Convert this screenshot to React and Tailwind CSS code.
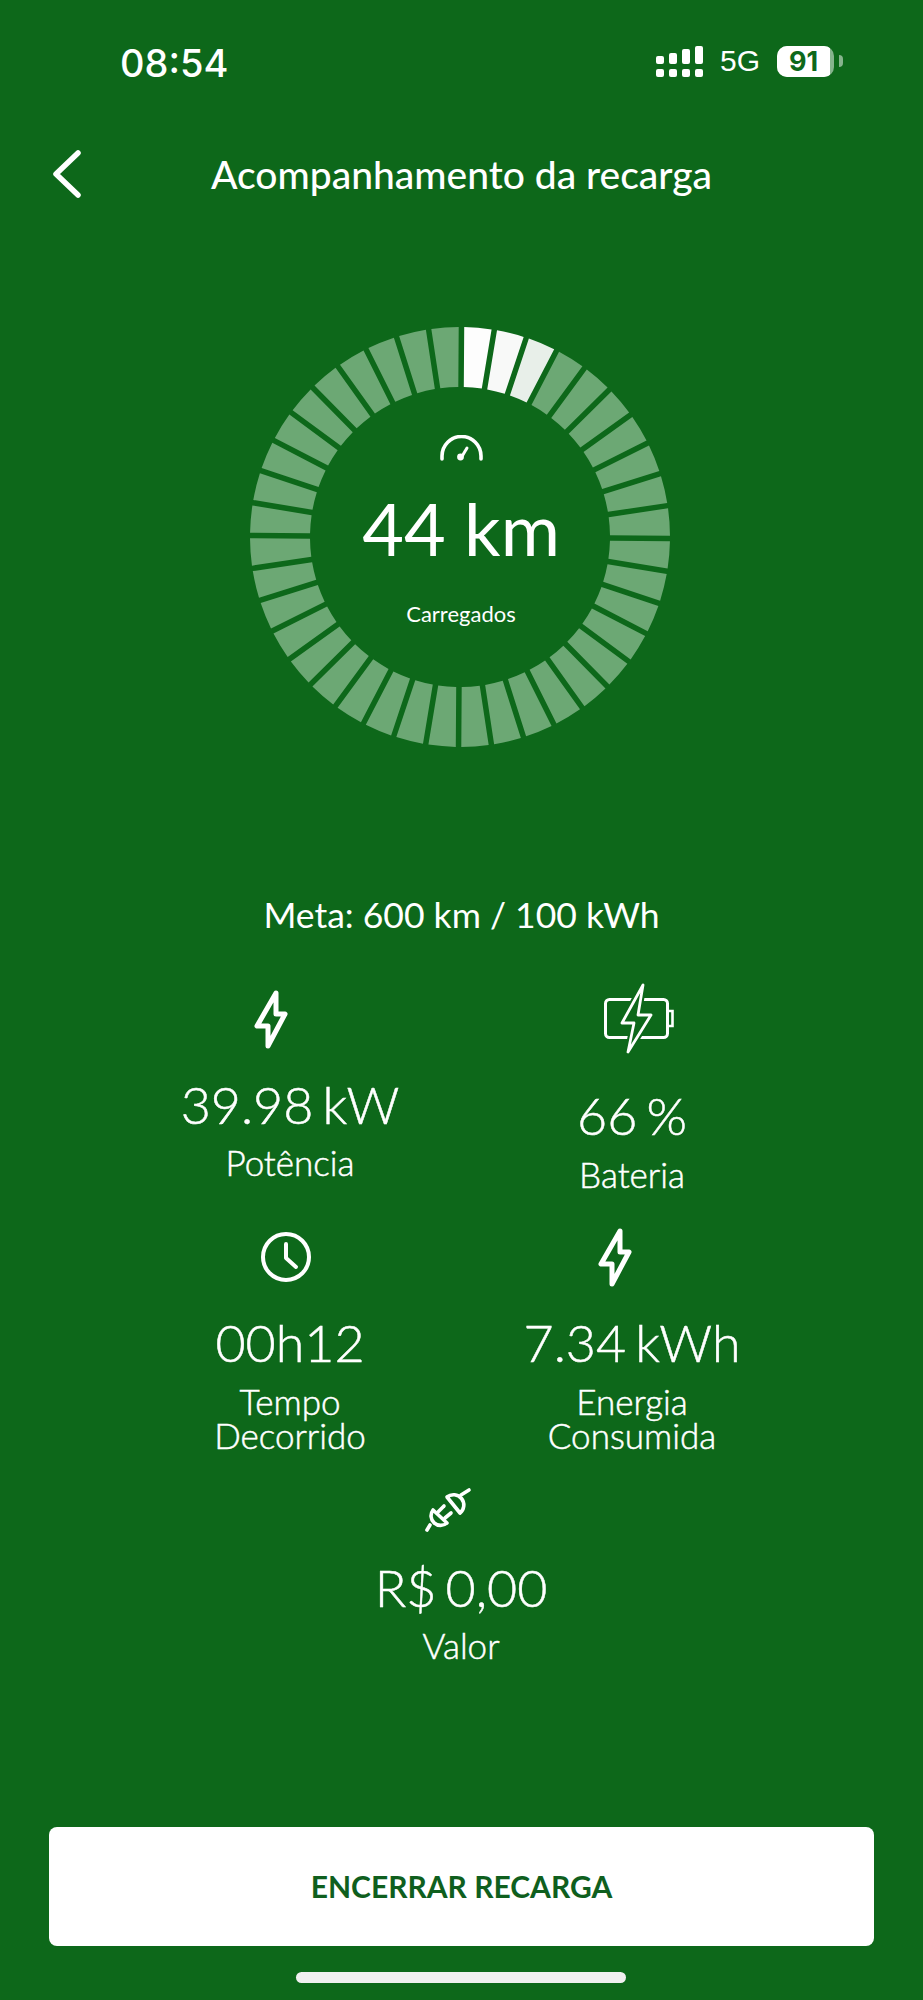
import React from "react";

const SEGMENTS = 40;
const R_OUT = 210;
const R_IN = 150;
const GAP = 5.5;

function polar(r, deg) {
  const a = ((deg - 90) * Math.PI) / 180;
  return [210 + r * Math.cos(a), 210 + r * Math.sin(a)];
}

function segPath(i) {
  const start = 0.4 + i * 9;
  const end = start + 9;
  const dOut = (Math.asin(GAP / 2 / R_OUT) * 180) / Math.PI;
  const dIn = (Math.asin(GAP / 2 / R_IN) * 180) / Math.PI;
  const a = polar(R_OUT, start + dOut);
  const b = polar(R_OUT, end - dOut);
  const c = polar(R_IN, end - dIn);
  const d = polar(R_IN, start + dIn);
  return `M${a[0]} ${a[1]} A${R_OUT} ${R_OUT} 0 0 1 ${b[0]} ${b[1]} L${c[0]} ${c[1]} A${R_IN} ${R_IN} 0 0 0 ${d[0]} ${d[1]} Z`;
}

const segColor = (i) => (i === 0 ? "#fdfdfd" : i === 1 ? "#f8f9f8" : i === 2 ? "#e8efe9" : "#6ca874");

function Bolt() {
  return (
    <svg width="34" height="59" viewBox="0 0 34 59" fill="none" stroke="#fff" strokeWidth="5" strokeLinejoin="round">
      <path d="M22 3 L3 36 H14 V56 L31 24 H22 Z" />
    </svg>
  );
}

function BatteryIcon() {
  return (
    <svg width="70" height="72" viewBox="0 0 70 72" fill="none" className="translate-x-[7px]">
      <rect x="1.5" y="16.5" width="62" height="38" rx="4" stroke="#fff" strokeWidth="3" />
      <path d="M64 28 H68.5 V43 H64" stroke="#fff" strokeWidth="2.6" />
      <path d="M39 2 L18 40 H30 L24 69 L47 32 H34 Z" stroke="#0d681a" strokeWidth="7" strokeLinejoin="round" fill="#0d681a" />
      <path d="M39 2 L18 40 H30 L24 69 L47 32 H34 Z" stroke="#fff" strokeWidth="2.8" strokeLinejoin="round" fill="#0d681a" />
    </svg>
  );
}

function ClockIcon() {
  return (
    <svg width="50" height="50" viewBox="0 0 50 50" fill="none" stroke="#fff" strokeWidth="4" strokeLinecap="round" strokeLinejoin="round" className="-translate-x-[4px]">
      <circle cx="25" cy="25" r="23" />
      <path d="M25 12 V26 L35 35" />
    </svg>
  );
}

function PlugIcon() {
  return (
    <svg width="65" height="60" viewBox="0 0 65 60" fill="none" stroke="#fff" strokeWidth="3.6" strokeLinecap="round" strokeLinejoin="round">
      <path d="M31 16 L44 32 A10.3 10.3 0 0 0 31 16 Z" />
      <path d="M45 14 L53 9" />
      <path d="M17 29 L31 42 A9.6 9.6 0 0 1 17 29 Z" />
      <path d="M14 44 L11 49" />
      <path d="M22 31 L28 25" />
      <path d="M29 37 L35 32" />
    </svg>
  );
}

function GaugeIcon() {
  return (
    <svg width="43" height="26" viewBox="0 0 43 26" fill="none" stroke="#fff" strokeLinecap="round">
      <path d="M2 24 V21 A19.5 19.5 0 0 1 41 21 V24" strokeWidth="3.6" />
      <path d="M21 23 L27 13" strokeWidth="3" />
      <circle cx="20.5" cy="22" r="3.4" fill="#fff" stroke="none" />
    </svg>
  );
}

function Signal() {
  const heights = [8, 11, 15, 18];
  return (
    <div className="flex items-end gap-[5px]">
      {heights.map((h, i) => (
        <div key={i} className="flex flex-col gap-[5px] w-[8px]">
          <div className="bg-white rounded-[2px]" style={{ height: h }} />
          <div className="bg-white rounded-[2px] h-[8px]" />
        </div>
      ))}
    </div>
  );
}

function Stat({ icon, value, label, gap = "mt-[19px]", labelGap = "mt-[11px]", className = "" }) {
  return (
    <div className={`flex flex-col items-center text-center ${className}`}>
      <div className="h-[72px] flex items-center justify-center">{icon}</div>
      <div className={`${gap} h-[60px] text-[52px] leading-[60px] font-light [word-spacing:-5px] [-webkit-text-stroke:0.5px_white]`}>{value}</div>
      <div className={`${labelGap} text-[35px] leading-[34px] font-light [-webkit-text-stroke:0.5px_white]`}>{label}</div>
    </div>
  );
}

export default function App() {
  return (
    <div className="h-[2000px] w-[923px] flex flex-col bg-[#0d681a] text-white font-['Lato','Noto_Sans',sans-serif]">
      <div className="h-[130px] pt-[41px] pl-[120px] pr-[80px] flex items-start justify-between">
        <div className="font-['Inter',sans-serif] font-medium text-[38px] leading-[44px]">08:54</div>
        <div className="flex items-center h-[44px] mt-[-2px]">
          <Signal />
          <div className="ml-[17px] font-['Liberation_Sans',sans-serif] text-[30px] leading-[32px]">5G</div>
          <div className="ml-[17px] relative w-[57px] h-[31px] rounded-[10px] bg-white/50 overflow-hidden">
            <div className="h-full w-[53px] bg-white flex items-center justify-center text-[#0d681a] font-['Inter',sans-serif] font-bold text-[27px] leading-[31px]">91</div>
          </div>
          <div className="ml-[5px] w-[4px] h-[12px] rounded-r-full bg-white/50" />
        </div>
      </div>

      <div className="h-[90px] relative flex items-center justify-center">
        <svg className="absolute left-[50px] top-[19px]" width="32" height="50" viewBox="0 0 32 50" fill="none" stroke="#fff" strokeWidth="5.5" strokeLinecap="round" strokeLinejoin="round">
          <path d="M28 4 L6 25 L28 46" />
        </svg>
        <div className="text-[39px] leading-[44px] font-medium -mt-[3px]">Acompanhamento da recarga</div>
      </div>

      <div className="mt-[107px] ml-[250px] relative w-[420px] h-[420px]">
        <svg width="420" height="420" viewBox="0 0 420 420">
          {Array.from({ length: SEGMENTS }).map((_, i) => (
            <path key={i} d={segPath(i)} fill={segColor(i)} />
          ))}
        </svg>
        <div className="absolute inset-0 flex flex-col items-center pt-[108px]">
          <div className="translate-x-[1px]"><GaugeIcon /></div>
          <div className="mt-[24px] text-[72px] leading-[86px] font-normal translate-x-[1px]">44 km</div>
          <div className="mt-[29px] text-[22px] leading-[28px] translate-x-[1px]">Carregados</div>
        </div>
      </div>

      <div className="mt-[148px] h-[40px] text-center text-[35.5px] leading-[40px]">Meta: 600 km / 100 kWh</div>

      <div className="mt-[48px] w-[684px] ml-[119px] grid grid-cols-2 gap-y-[21px]">
        <Stat className="min-h-[217px]" icon={<div className="-translate-x-[19px]"><Bolt /></div>} value="39.98 kW" label="Potência" />
        <Stat icon={<BatteryIcon />} value="66 %" label="Bateria" gap="mt-[30px]" labelGap="mt-[12px]" />
        <Stat icon={<ClockIcon />} value="00h12" label={<>Tempo<br />Decorrido</>} labelGap="mt-[12px]" />
        <Stat icon={<div className="-translate-x-[17px]"><Bolt /></div>} value="7.34 kWh" label={<>Energia<br />Consumida</>} labelGap="mt-[12px]" />
        <Stat className="col-span-2 mt-[2px]" icon={<div className="-translate-x-[13px]"><PlugIcon /></div>} value="R$ 0,00" label="Valor" gap="mt-[10px]" labelGap="mt-[11px]" />
      </div>

      <div className="mt-auto mx-[49px] h-[119px] rounded-[8px] bg-white flex items-center justify-center text-[#0f5f1e] text-[30px] font-bold">ENCERRAR RECARGA</div>
      <div className="mt-[26px] mb-[17px] ml-[296px] w-[330px] h-[11px] rounded-full bg-[#f0f0f0]" />
    </div>
  );
}
